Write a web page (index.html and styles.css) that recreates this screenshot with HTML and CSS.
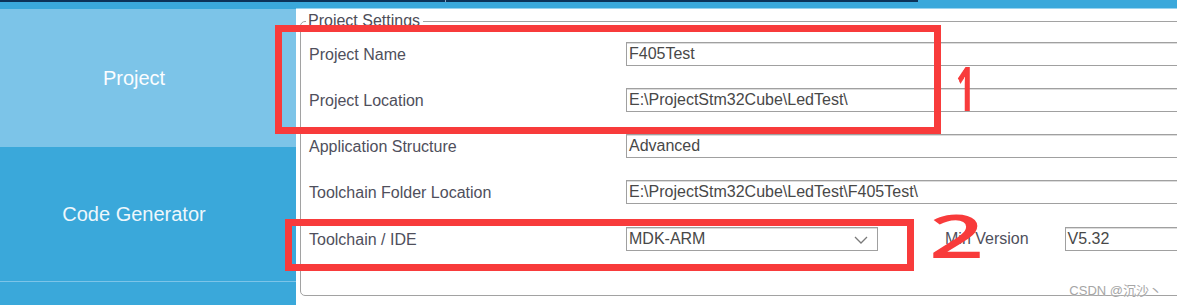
FILE: index.html
```html
<!DOCTYPE html>
<html lang="en">
  <head>
    <meta charset="UTF-8" />
    <meta name="viewport" content="width=device-width, initial-scale=1.0" />
    <title>Project Manager</title>
    <link rel="stylesheet" href="styles.css">
  </head>

  <body>
    <div class="app">
      <header class="topbar">
        <div class="menu-strip"><span class="menu-sep"></span></div>
      </header>

      <div class="main">
        <nav class="sidebar">
          <div class="tab tab-active">Project</div>
          <div class="tab">Code Generator</div>
        </nav>

        <section class="content">
          <fieldset class="settings">
            <legend>Project Settings</legend>
            <div class="form-grid">
              <label>Project Name</label>
              <div class="field">F405Test</div>

              <label>Project Location</label>
              <div class="field">E:\ProjectStm32Cube\LedTest\</div>

              <label>Application Structure</label>
              <div class="field">Advanced</div>

              <label>Toolchain Folder Location</label>
              <div class="field">E:\ProjectStm32Cube\LedTest\F405Test\</div>

              <label class="row-ide">Toolchain / IDE</label>
              <div class="ide-row row-ide">
                <div class="field select">
                  MDK-ARM
                  <svg class="chevron" width="14" height="8" viewBox="0 0 14 8">
                    <polyline points="1,1 7,7 13,1" fill="none" stroke="#7a7a7a" stroke-width="1.3" />
                  </svg>
                </div>
                <span class="min-label">Min Version</span>
                <div class="field version">V5.32</div>
              </div>
            </div>
          </fieldset>
        </section>
      </div>

      <!-- hand-drawn annotations on top of the screenshot -->
      <div class="mark mark-box-1"></div>
      <div class="mark mark-box-2"></div>
      <span class="mark-num mark-num-1">1</span>
      <span class="mark-num mark-num-2">2</span>

      <span class="watermark">CSDN @沉沙丶</span>
    </div>
  </body>
</html>
```

FILE: styles.css
```css
body {
  margin: 0;
  background-color: #fff;
  font-family: "Liberation Sans", Arial, sans-serif;
  overflow: hidden;
}

.app {
  position: relative;
  width: 1177px;
  height: 305px;
  overflow: hidden;
}

.topbar {
  height: 9px;
  background-color: #3aa8db;
}

.menu-strip {
  position: relative;
  width: 918px;
  height: 2px;
  background-color: #0c3258;
}

.menu-sep {
  position: absolute;
  left: 445px;
  top: 0;
  width: 1px;
  height: 2px;
  background-color: #8aa6c0;
}

.main {
  display: flex;
  height: 296px;
}

.sidebar {
  width: 296px;
  flex-shrink: 0;
  background-color: #3aa8da;
}

.tab {
  height: 134px;
  padding-right: 28px;
  display: flex;
  align-items: center;
  justify-content: center;
  font-size: 20px;
  color: #eef7fc;
  border-bottom: 1px solid #7cc4e8;
}

.tab-active {
  height: 138px;
  background-color: #7cc4e8;
  color: #fbfdff;
  border-bottom: none;
}

.content {
  flex: 1;
  overflow: hidden;
  border-top: 1px solid #9ad3ef;
  margin-top: -1px;
}

.settings {
  width: 1000px;
  margin: 3px 0 0 4px;
  padding: 12px 0 45px 8px;
  border: 1px solid #a2a2a2;
  border-radius: 5px;
  box-sizing: border-box;
}

.settings legend {
  margin-left: -3px;
  padding: 0 3px 0 2px;
  font-size: 16px;
  line-height: 18px;
  color: #4d4d58;
}

.form-grid {
  display: grid;
  grid-template-columns: 317px auto;
  grid-auto-rows: 24px;
  row-gap: 22px;
  align-items: center;
}

.form-grid label {
  padding-top: 2px;
  font-size: 16px;
  color: #4f4f5c;
}

.row-ide {
  margin-top: 2px;
}

.field {
  box-sizing: border-box;
  width: 600px;
  height: 24px;
  padding-left: 2px;
  border: 1px solid #a0a0a0;
  box-shadow: inset 0 1px 0 #dcdcdc;
  font-size: 16px;
  line-height: 22px;
  color: #484848;
  white-space: nowrap;
}

.ide-row {
  display: flex;
  align-items: center;
  height: 24px;
}

.select {
  position: relative;
  width: 252px;
}

.chevron {
  position: absolute;
  right: 9px;
  top: 8px;
}

.min-label {
  margin-left: 67px;
  font-size: 16px;
  color: #4f4f5c;
}

.version {
  width: 200px;
  margin-left: 36px;
}

.mark {
  position: absolute;
  border: 7px solid #f83b3b;
  box-sizing: border-box;
}

.mark-box-1 {
  left: 275px;
  top: 25px;
  width: 666px;
  height: 109px;
}

.mark-box-2 {
  left: 285px;
  top: 219px;
  width: 629px;
  height: 52px;
}

.mark-num {
  position: absolute;
  color: #f83b3b;
  font-family: "Open Sans", sans-serif;
  font-size: 60px;
  line-height: 60px;
  transform-origin: left top;
  will-change: transform;
}

.mark-num-1 {
  left: 956px;
  top: 58px;
  font-weight: bold;
  transform: scaleX(0.55);
}

.mark-num-2 {
  left: 929px;
  top: 205px;
  font-weight: 600;
  transform: scaleX(1.6);
}

.watermark {
  position: absolute;
  right: 15px;
  top: 280px;
  font-family: "Liberation Sans", "Noto Sans CJK SC", sans-serif;
  font-size: 13px;
  color: #a6a6a6;
  text-shadow: 0 0 2px #fff;
}
```
